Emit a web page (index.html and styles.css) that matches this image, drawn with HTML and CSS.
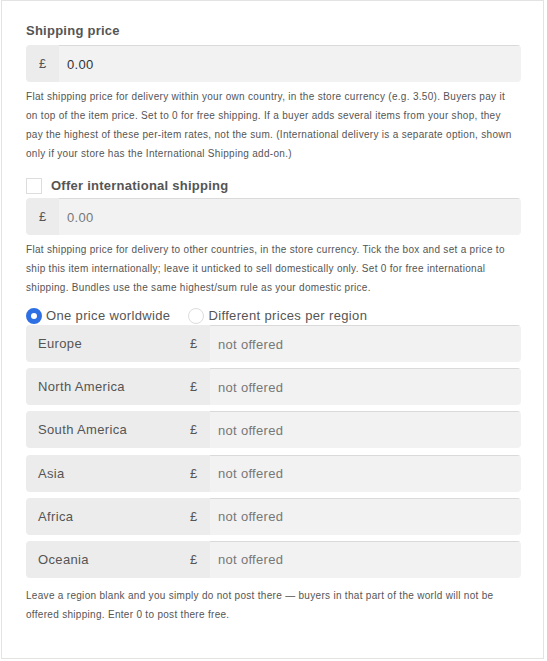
FILE: index.html
```html
<!DOCTYPE html>
<html lang="en">
<head>
    <meta charset="UTF-8">
    <meta name="viewport" content="width=device-width, initial-scale=1.0">
    <title>Shipping</title>
    <link rel="stylesheet" href="styles.css">
</head>
<body>
    <div class="panel">
        <!-- Domestic shipping -->
        <div class="field">
            <label class="field-label">Shipping price</label>
            <div class="input-group">
                <span class="addon">£</span>
                <span class="input">0.00</span>
            </div>
            <p class="help">Flat shipping price for delivery within your own country, in the store currency (e.g. 3.50). Buyers pay it on top of the item price. Set to 0 for free shipping. If a buyer adds several items from your shop, they pay the highest of these per-item rates, not the sum. (International delivery is a separate option, shown only if your store has the International Shipping add-on.)</p>
        </div>

        <!-- International shipping -->
        <div class="field">
            <label class="check-row">
                <span class="checkbox"></span>
                <span class="field-label">Offer international shipping</span>
            </label>
            <div class="input-group">
                <span class="addon">£</span>
                <span class="input placeholder">0.00</span>
            </div>
            <p class="help">Flat shipping price for delivery to other countries, in the store currency. Tick the box and set a price to ship this item internationally; leave it unticked to sell domestically only. Set 0 for free international shipping. Bundles use the same highest/sum rule as your domestic price.</p>
        </div>

        <div class="radio-row">
            <label class="radio-option"><span class="radio checked"></span>One price worldwide</label>
            <label class="radio-option"><span class="radio"></span>Different prices per region</label>
        </div>

        <div class="regions">
            <div class="region-row"><span class="region-name">Europe</span><span class="region-cur">£</span><span class="input placeholder">not offered</span></div>
            <div class="region-row"><span class="region-name">North America</span><span class="region-cur">£</span><span class="input placeholder">not offered</span></div>
            <div class="region-row"><span class="region-name">South America</span><span class="region-cur">£</span><span class="input placeholder">not offered</span></div>
            <div class="region-row"><span class="region-name">Asia</span><span class="region-cur">£</span><span class="input placeholder">not offered</span></div>
            <div class="region-row"><span class="region-name">Africa</span><span class="region-cur">£</span><span class="input placeholder">not offered</span></div>
            <div class="region-row"><span class="region-name">Oceania</span><span class="region-cur">£</span><span class="input placeholder">not offered</span></div>
        </div>

        <p class="help">Leave a region blank and you simply do not post there — buyers in that part of the world will not be offered shipping. Enter 0 to post there free.</p>
    </div>
</body>
</html>
```

FILE: styles.css
```css
/* General */
body {
    font-family: "Liberation Sans", Arial, sans-serif;
    background-color: #ffffff;
    color: #555555;
    margin: 0;
    padding: 0 3px 1px 1px;
}

.panel {
    border: 1px solid #e3e3e3;
    padding: 21px 22px 34px 24px;
}

/* Fields */
.field-label {
    display: block;
    font-size: 13px;
    font-weight: bold;
    line-height: 18px;
    letter-spacing: 0.25px;
    color: #555555;
    margin-bottom: 5px;
}

.input-group {
    display: flex;
    height: 37px;
    border-radius: 4px;
    overflow: hidden;
}

.addon {
    width: 33px;
    flex-shrink: 0;
    display: flex;
    align-items: center;
    justify-content: center;
    background: #ececec;
    font-size: 13px;
    color: #555555;
}

.input {
    flex: 1;
    display: flex;
    align-items: center;
    padding-left: 8px;
    background: #f2f2f2;
    border-top: 1px solid #dadada;
    font-size: 13px;
    letter-spacing: 0.3px;
    color: #333333;
}

.input.placeholder {
    color: #777777;
}

.help {
    font-size: 10px;
    line-height: 19px;
    letter-spacing: 0.3px;
    color: #555555;
    margin: 5px 6px 0 0;
}

/* Checkbox */
.check-row {
    display: flex;
    align-items: center;
    margin-top: 14px;
    margin-bottom: 3px;
}

.check-row .field-label {
    margin: 0;
}

.checkbox {
    width: 14px;
    height: 14px;
    border: 1px solid #dddddd;
    background: #ffffff;
    margin-right: 9px;
}

/* Radios */
.radio-row {
    display: flex;
    gap: 18px;
    margin-top: 10px;
}

.radio-option {
    display: flex;
    align-items: center;
    gap: 4px;
    font-size: 13px;
    line-height: 17px;
    letter-spacing: 0.35px;
    color: #555555;
}

.radio {
    width: 14px;
    height: 14px;
    border: 1px solid #dddddd;
    border-radius: 50%;
    background: #ffffff;
}

.radio.checked {
    width: 6px;
    height: 6px;
    border: 5px solid #2f6fe4;
}

/* Regions */
.regions {
    display: flex;
    flex-direction: column;
    gap: 6.2px;
    margin-top: 1px;
}

.region-row {
    display: flex;
    height: 37px;
    border-radius: 4px;
    overflow: hidden;
    font-size: 13px;
}

.region-name {
    width: 139px;
    padding-left: 12px;
    display: flex;
    align-items: center;
    background: #ececec;
    letter-spacing: 0.35px;
    color: #555555;
}

.region-cur {
    width: 33px;
    display: flex;
    align-items: center;
    justify-content: center;
    background: #ececec;
    color: #555555;
}

.regions + .help {
    margin-top: 8px;
}
```
